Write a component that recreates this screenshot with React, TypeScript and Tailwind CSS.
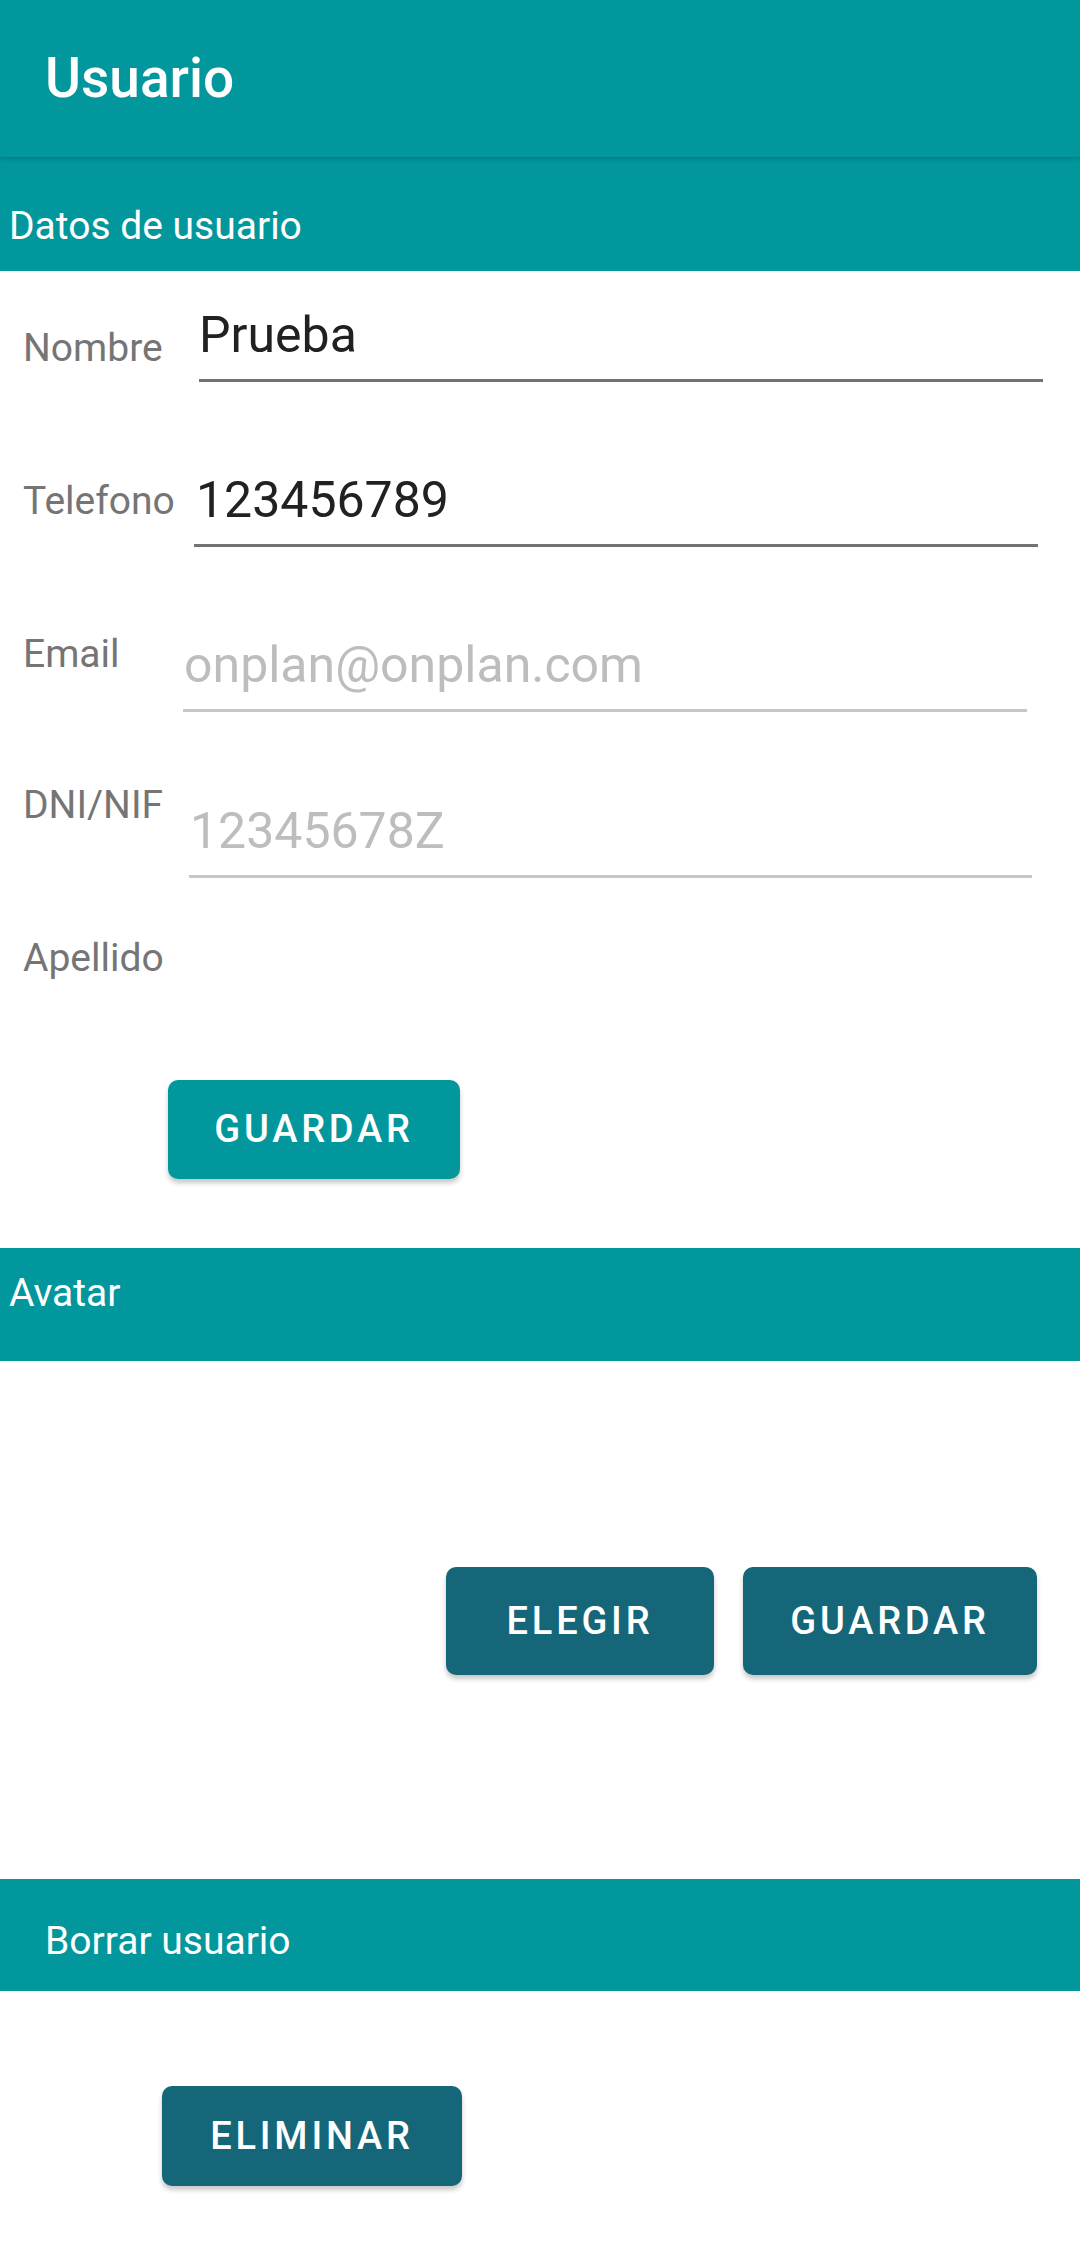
type FieldProps = {
  label: string;
  value: string;
  placeholder?: boolean;
  labelClass: string;
  inputClass: string;
};

const Field = ({ label, value, placeholder, labelClass, inputClass }: FieldProps) => (
  <div className="flex items-start">
    <span className={`shrink-0 pl-[23px] text-[39px] leading-[45px] text-[#757575] ${labelClass}`}>
      {label}
    </span>
    <div
      className={`h-[76px] pb-[14px] text-[50px] leading-[59px] border-b-[3px] ${
        placeholder ? "text-[#bdbdbd] border-[#c6c6c6]" : "text-[#212121] border-[#727272]"
      } ${inputClass}`}
    >
      {value}
    </div>
  </div>
);

const SectionHeader = ({ title, className }: { title: string; className: string }) => (
  <div className={`bg-[#01979c] text-white text-[39px] leading-[45px] ${className}`}>{title}</div>
);

const Button = ({ label, className }: { label: string; className: string }) => (
  <button
    className={`flex items-center justify-center rounded-[10px] text-white text-[38px] font-medium tracking-[0.1em] shadow-[0_4px_5px_rgba(0,0,0,0.22)] ${className}`}
  >
    {label}
  </button>
);

export default function App() {
  return (
    <div className="w-[1080px] h-[2258px] bg-white font-['Roboto',sans-serif] overflow-hidden">
      <header className="relative z-10 h-[157px] bg-[#01979c] flex items-center pl-[45px] shadow-[0_2px_4px_rgba(0,0,0,0.18)]">
        <h1 className="text-white text-[55px] font-medium leading-none">Usuario</h1>
      </header>

      <SectionHeader title="Datos de usuario" className="h-[114px] pt-[47px] pl-[9px]" />

      <section>
        <Field
          label="Nombre"
          value="Prueba"
          labelClass="mt-[55px] w-[199px]"
          inputClass="mt-[35px] w-[844px]"
        />
        <Field
          label="Telefono"
          value="123456789"
          labelClass="mt-[97px] w-[194px]"
          inputClass="mt-[89px] w-[844px] pl-[2px]"
        />
        <Field
          label="Email"
          value="onplan@onplan.com"
          placeholder
          labelClass="mt-[85px] w-[183px]"
          inputClass="mt-[89px] w-[844px] pl-[1px]"
        />
        <Field
          label="DNI/NIF"
          value="12345678Z"
          placeholder
          labelClass="mt-[71px] w-[189px]"
          inputClass="mt-[90px] w-[843px] pl-[1px]"
        />
        <div className="pl-[23px] mt-[58px] text-[39px] leading-[45px] text-[#757575]">Apellido</div>
        <div className="pl-[168px] mt-[99px]">
          <Button label="GUARDAR" className="w-[292px] h-[99px] bg-[#01979c]" />
        </div>
      </section>

      <SectionHeader title="Avatar" className="mt-[69px] h-[113px] pt-[23px] pl-[9px]" />

      <section className="h-[518px] flex items-center justify-end gap-[29px] pr-[43px] pt-[2px]">
        <Button label="ELEGIR" className="w-[268px] h-[108px] bg-[#156678]" />
        <Button label="GUARDAR" className="w-[294px] h-[108px] bg-[#156678]" />
      </section>

      <SectionHeader title="Borrar usuario" className="h-[112px] pt-[40px] pl-[45px]" />

      <section className="pl-[162px] pt-[95px]">
        <Button label="ELIMINAR" className="w-[300px] h-[100px] bg-[#156678]" />
      </section>
    </div>
  );
}
